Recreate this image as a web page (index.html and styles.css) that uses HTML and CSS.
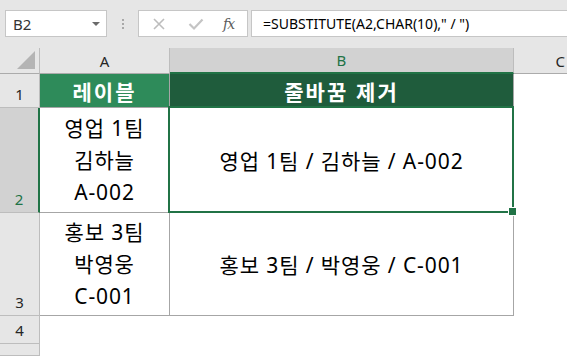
FILE: index.html
```html
<!DOCTYPE html>
<html lang="ko">

<head>
    <meta charset="UTF-8">
    <title>SUBSTITUTE</title>
    <link rel="stylesheet" href="styles.css">
</head>

<body>
    <div class="toolbar">
        <div class="name-box">
            <span>B2</span>
            <span class="caret"></span>
        </div>
        <div class="grip"><i></i><i></i><i></i></div>
        <div class="fx-box">
            <svg class="tool-icon" width="14" height="14" viewBox="0 0 14 14">
                <path d="M2 2 L12 12 M12 2 L2 12" stroke="#bdbdbd" stroke-width="1.6" fill="none" />
            </svg>
            <svg class="tool-icon" width="16" height="14" viewBox="0 0 16 14">
                <path d="M1.5 7 L6 11.5 L14.5 2.5" stroke="#c4c4c4" stroke-width="2.2" fill="none" />
            </svg>
            <span class="fx">fx</span>
        </div>
        <div class="formula">=SUBSTITUTE(A2,CHAR(10),&quot; / &quot;)</div>
    </div>

    <div class="sheet">
        <!-- column headers -->
        <div class="corner"><span class="corner-tri"></span></div>
        <div class="col-head">A</div>
        <div class="col-head selected">B</div>
        <div class="col-head last">C</div>

        <!-- row 1 -->
        <div class="row-head">1</div>
        <div class="cell title light">레이블</div>
        <div class="cell title dark">줄바꿈 제거</div>
        <div class="blank"></div>

        <!-- row 2 -->
        <div class="row-head selected">2</div>
        <div class="cell data multi">영업 1팀<br>김하늘<br>A-002</div>
        <div class="cell data active">영업 1팀 / 김하늘 / A-002</div>
        <div class="blank"></div>

        <!-- row 3 -->
        <div class="row-head">3</div>
        <div class="cell data multi">홍보 3팀<br>박영웅<br>C-001</div>
        <div class="cell data">홍보 3팀 / 박영웅 / C-001</div>
        <div class="blank"></div>

        <!-- row 4, and the top of row 5 (its number sits below the fold) -->
        <div class="row-head">4</div>
        <div class="blank"></div>
        <div class="blank"></div>
        <div class="blank"></div>

        <div class="row-head"></div>
        <div class="blank"></div>
        <div class="blank"></div>
        <div class="blank"></div>
    </div>
</body>

</html>
```

FILE: styles.css
```css
:root {
    --bar-bg: #e6e6e6;
    --head-bg: #e6e6e6;
    --head-sel: #d2d2d2;
    --head-line: #bdbdbd;
    --grid-line: #a6a6a6;
    --excel-green: #217346;
    --title-light: #2e8b5a;
    --title-dark: #1f5c3c;
    --ui-font: 'Noto Sans', 'Noto Sans CJK KR', sans-serif;
}

* {
    box-sizing: border-box;
    margin: 0;
    padding: 0;
}

body {
    width: 567px;
    height: 356px;
    overflow: hidden;
    background-color: #ffffff;
    font-family: var(--ui-font);
    color: #000;
}

/* formula bar */
.toolbar {
    display: flex;
    align-items: center;
    height: 48px;
    padding: 10px 0 11px 5px;
    background-color: var(--bar-bg);
}

.name-box {
    width: 102px;
    height: 27px;
    display: flex;
    align-items: center;
    justify-content: space-between;
    padding: 0 6px 0 7px;
    background-color: #fff;
    border: 1px solid #c6c6c6;
    font-size: 15px;
    color: #333;
}

.caret {
    width: 0;
    height: 0;
    border-left: 4px solid transparent;
    border-right: 4px solid transparent;
    border-top: 4px solid #6a6a6a;
}

.grip {
    width: 31px;
    display: flex;
    flex-direction: column;
    align-items: center;
    gap: 2px;
}

.grip i {
    display: block;
    width: 2px;
    height: 2px;
    background-color: #a8a8a8;
}

.fx-box {
    width: 110px;
    height: 27px;
    display: flex;
    align-items: center;
    padding-left: 13px;
    background-color: #fff;
    border: 1px solid #c6c6c6;
}

.tool-icon {
    display: block;
}

.tool-icon + .tool-icon {
    margin-left: 22px;
}

.fx {
    margin-left: 19px;
    font-family: 'DejaVu Serif', 'Liberation Serif', serif;
    font-style: italic;
    font-size: 14px;
    color: #5c5c5c;
    letter-spacing: -1px;
}

.formula {
    flex: 1;
    height: 27px;
    margin-left: 3px;
    display: flex;
    align-items: center;
    padding-left: 11px;
    background-color: #fff;
    border-top: 1px solid #c6c6c6;
    border-bottom: 1px solid #c6c6c6;
    border-left: 1px solid #c6c6c6;
    font-size: 14px;
    white-space: nowrap;
}

/* sheet grid */
.sheet {
    display: grid;
    grid-template-columns: 40px 130px 344px 53px;
    grid-template-rows: 26px 34px 105px 103px 28px 12px;
}

.corner {
    position: relative;
    background-color: var(--head-bg);
    border-right: 1px solid var(--head-line);
    border-bottom: 1px solid #ababab;
}

.corner-tri {
    position: absolute;
    right: 4px;
    bottom: 4px;
    width: 0;
    height: 0;
    border-left: 18px solid transparent;
    border-bottom: 18px solid #b4b4b4;
}

.col-head {
    display: flex;
    align-items: center;
    justify-content: center;
    background-color: var(--head-bg);
    border-right: 1px solid var(--head-line);
    border-bottom: 1px solid #ababab;
    font-size: 15px;
    color: #262626;
}

.col-head.selected {
    background-color: var(--head-sel);
    color: var(--excel-green);
    border-bottom: 2px solid var(--excel-green);
}

.col-head.last {
    justify-content: flex-end;
    padding-right: 2px;
    border-right: none;
}

.row-head {
    display: flex;
    align-items: flex-end;
    justify-content: center;
    padding-bottom: 3px;
    background-color: var(--head-bg);
    border-right: 1px solid var(--head-line);
    border-bottom: 1px solid var(--head-line);
    font-size: 15px;
    color: #262626;
}

.row-head.selected {
    background-color: var(--head-sel);
    color: var(--excel-green);
    border-right: 2px solid var(--excel-green);
}

.cell {
    display: flex;
    align-items: center;
    justify-content: center;
    text-align: center;
    border-right: 1px solid var(--grid-line);
    border-bottom: 1px solid var(--grid-line);
    font-family: 'Noto Sans', 'Noto Sans CJK KR', sans-serif;
    font-size: 21px;
    letter-spacing: 0.9px;
}

.cell.title {
    color: #fff;
    font-weight: 700;
    font-family: 'Noto Sans CJK KR', sans-serif;
    font-size: 21px;
    letter-spacing: 2px;
}

.cell.light {
    background-color: var(--title-light);
}

.cell.dark {
    background-color: var(--title-dark);
}

.cell.multi {
    line-height: 32px;
}

.cell.active {
    position: relative;
}

.cell.active::after {
    content: '';
    position: absolute;
    left: -2px;
    top: -2px;
    right: -1px;
    bottom: -1px;
    border: 2px solid var(--excel-green);
}

.cell.active::before {
    content: '';
    position: absolute;
    right: -4px;
    bottom: -4px;
    width: 7px;
    height: 7px;
    background-color: var(--excel-green);
    border: 1px solid #fff;
    z-index: 1;
}

.blank {
    background-color: #fff;
}
```
